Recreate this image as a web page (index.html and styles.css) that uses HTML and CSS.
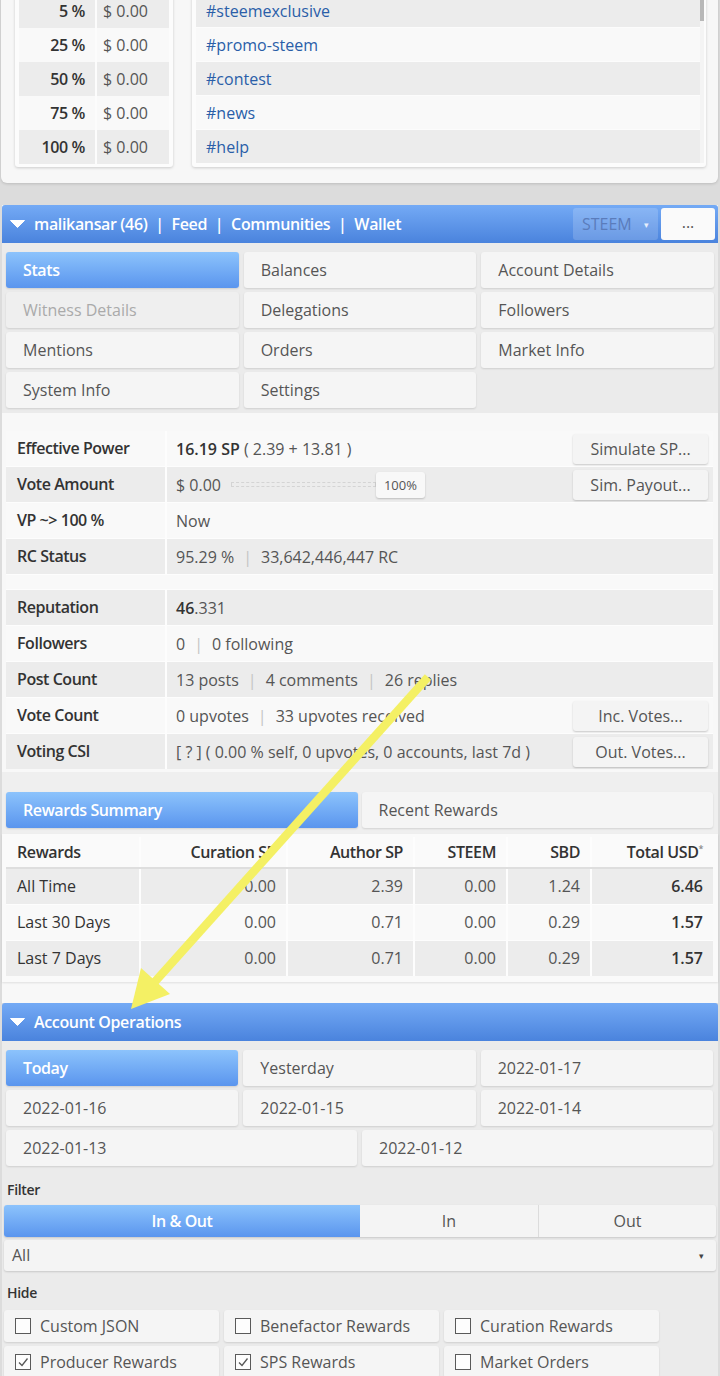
FILE: index.html
```html
<!DOCTYPE html>
<html lang="en">
<head>
    <meta charset="UTF-8">
    <meta name="viewport" content="width=device-width, initial-scale=1.0">
    <title>malikansar - Wallet Stats</title>
    <link rel="stylesheet" href="styles.css">
</head>
<body>
    <!-- Vote value table and trending tags -->
    <div class="top-panel">
        <div class="vote-card">
            <div class="vote-row"><span class="pct">5 %</span><span class="usd">$ 0.00</span></div>
            <div class="vote-row"><span class="pct">25 %</span><span class="usd">$ 0.00</span></div>
            <div class="vote-row"><span class="pct">50 %</span><span class="usd">$ 0.00</span></div>
            <div class="vote-row"><span class="pct">75 %</span><span class="usd">$ 0.00</span></div>
            <div class="vote-row"><span class="pct">100 %</span><span class="usd">$ 0.00</span></div>
        </div>
        <div class="tag-card">
            <div class="tag-list">
                <div class="tag-row">#steemexclusive</div>
                <div class="tag-row">#promo-steem</div>
                <div class="tag-row">#contest</div>
                <div class="tag-row">#news</div>
                <div class="tag-row">#help</div>
            </div>
            <div class="scrollbar"><div class="thumb"></div></div>
        </div>
    </div>

    <!-- Account wallet panel -->
    <div class="wallet">
        <div class="bar-head">
            <svg class="caret" width="15" height="8" viewBox="0 0 15 8"><polygon points="0.5,0.5 14.5,0.5 7.5,7.5" fill="#fff" stroke="#fff" stroke-linejoin="round"/></svg>
            <span class="head-links">malikansar (46) <i>|</i> Feed <i>|</i> Communities <i>|</i> Wallet</span>
            <span class="coin-select">STEEM <small>&#9662;</small></span>
            <span class="more-btn">...</span>
        </div>

        <div class="tab-grid">
            <div class="tab active">Stats</div>
            <div class="tab">Balances</div>
            <div class="tab">Account Details</div>
            <div class="tab disabled">Witness Details</div>
            <div class="tab">Delegations</div>
            <div class="tab">Followers</div>
            <div class="tab">Mentions</div>
            <div class="tab">Orders</div>
            <div class="tab">Market Info</div>
            <div class="tab">System Info</div>
            <div class="tab">Settings</div>
        </div>

        <div class="stats">
            <div class="stat-table">
                <div class="stat-row light">
                    <div class="label">Effective Power</div>
                    <div class="value"><b>16.19 SP</b>&nbsp;( 2.39 + 13.81 )<span class="side-btn">Simulate SP...</span></div>
                </div>
                <div class="stat-row dark">
                    <div class="label">Vote Amount</div>
                    <div class="value">$ 0.00<span class="slider"></span><span class="pct-btn">100%</span><span class="side-btn">Sim. Payout...</span></div>
                </div>
                <div class="stat-row light">
                    <div class="label">VP ~&gt; 100 %</div>
                    <div class="value">Now</div>
                </div>
                <div class="stat-row dark">
                    <div class="label">RC Status</div>
                    <div class="value">95.29 %<i class="sep">|</i>33,642,446,447 RC</div>
                </div>
                <div class="stat-spacer"></div>
                <div class="stat-row dark">
                    <div class="label">Reputation</div>
                    <div class="value"><b>46</b>.331</div>
                </div>
                <div class="stat-row light">
                    <div class="label">Followers</div>
                    <div class="value">0<i class="sep">|</i>0 following</div>
                </div>
                <div class="stat-row dark">
                    <div class="label">Post Count</div>
                    <div class="value">13 posts<i class="sep">|</i>4 comments<i class="sep">|</i>26 replies</div>
                </div>
                <div class="stat-row light">
                    <div class="label">Vote Count</div>
                    <div class="value">0 upvotes<i class="sep">|</i>33 upvotes received<span class="side-btn">Inc. Votes...</span></div>
                </div>
                <div class="stat-row dark">
                    <div class="label">Voting CSI</div>
                    <div class="value">[ ? ] ( 0.00 % self, 0 upvotes, 0 accounts, last 7d )<span class="side-btn">Out. Votes...</span></div>
                </div>
            </div>
        </div>

        <div class="rewards">
            <div class="reward-tabs">
                <div class="tab active">Rewards Summary</div>
                <div class="tab">Recent Rewards</div>
            </div>
        </div>
        <div class="reward-card">
            <div class="reward-table">
                <div class="rw-row head">
                    <span class="first">Rewards</span><span>Curation SP</span><span>Author SP</span><span>STEEM</span><span>SBD</span><span>Total USD<sup>*</sup></span>
                </div>
                <div class="rw-row dark">
                    <span class="first">All Time</span><span>0.00</span><span>2.39</span><span>0.00</span><span>1.24</span><span class="total">6.46</span>
                </div>
                <div class="rw-row light">
                    <span class="first">Last 30 Days</span><span>0.00</span><span>0.71</span><span>0.00</span><span>0.29</span><span class="total">1.57</span>
                </div>
                <div class="rw-row dark">
                    <span class="first">Last 7 Days</span><span>0.00</span><span>0.71</span><span>0.00</span><span>0.29</span><span class="total">1.57</span>
                </div>
            </div>
        </div>
    </div>

    <!-- Account operations panel -->
    <div class="ops">
        <div class="bar-head">
            <svg class="caret" width="15" height="8" viewBox="0 0 15 8"><polygon points="0.5,0.5 14.5,0.5 7.5,7.5" fill="#fff" stroke="#fff" stroke-linejoin="round"/></svg>
            <span class="head-links">Account Operations</span>
        </div>
        <div class="ops-body">
            <div class="date-grid">
                <div class="tab active">Today</div>
                <div class="tab">Yesterday</div>
                <div class="tab">2022-01-17</div>
                <div class="tab">2022-01-16</div>
                <div class="tab">2022-01-15</div>
                <div class="tab">2022-01-14</div>
                <div class="tab wide">2022-01-13</div>
                <div class="tab wide">2022-01-12</div>
            </div>

            <div class="field-label">Filter</div>
            <div class="segment">
                <span class="on">In &amp; Out</span>
                <span>In</span>
                <span>Out</span>
            </div>
            <div class="select-box">All<small>&#9662;</small></div>

            <div class="field-label hide-label">Hide</div>
            <div class="check-grid">
                <label class="check"><span class="box"></span>Custom JSON</label>
                <label class="check"><span class="box"></span>Benefactor Rewards</label>
                <label class="check"><span class="box"></span>Curation Rewards</label>
                <label class="check"><span class="box"><svg width="12" height="12" viewBox="0 0 12 12"><polyline points="2,6.5 5,9.5 10.5,2.5" fill="none" stroke="#555" stroke-width="1.3"/></svg></span>Producer Rewards</label>
                <label class="check"><span class="box"><svg width="12" height="12" viewBox="0 0 12 12"><polyline points="2,6.5 5,9.5 10.5,2.5" fill="none" stroke="#555" stroke-width="1.3"/></svg></span>SPS Rewards</label>
                <label class="check"><span class="box"></span>Market Orders</label>
            </div>
        </div>
    </div>

    <!-- highlighter arrow drawn on top -->
    <svg class="pointer" width="720" height="1376" viewBox="0 0 720 1376">
        <line x1="428" y1="677" x2="152" y2="985" stroke="#f4f064" stroke-width="8.5"/>
        <polygon points="131,1009 141,968 170,994" fill="#f4f064"/>
    </svg>
</body>
</html>
```

FILE: styles.css
```css
body {
    margin: 0;
    font-family: "Open Sans", "Liberation Sans", sans-serif;
    font-size: 16px;
    color: #555;
    background-color: #dcdcdc;
    position: relative;
    overflow: hidden;
}

/* top panel: vote values + tags */
.top-panel {
    margin: -10px 2px 0 1px;
    padding: 0 12px 16px 14px;
    background-color: #f7f7f7;
    border-radius: 0 0 6px 6px;
    box-shadow: 0 1px 3px rgba(0, 0, 0, 0.15);
    display: flex;
    gap: 19px;
}
.vote-card,
.tag-card {
    background-color: #fcfcfc;
    border-radius: 0 0 3px 3px;
    box-shadow: 0 1px 3px rgba(0, 0, 0, 0.18);
    padding: 4px;
}
.vote-card {
    width: 150px;
}
.vote-row {
    display: grid;
    grid-template-columns: 76px 72px;
    column-gap: 2px;
    height: 33px;
    line-height: 34px;
    margin-bottom: 1px;
}
.vote-row:last-child,
.tag-row:last-child {
    margin-bottom: 0;
}
.vote-row span {
    background-color: #f9f9f9;
}
.vote-row:nth-child(odd) span {
    background-color: #ececec;
}
.pct {
    text-align: right;
    padding-right: 10px;
    font-weight: 600;
    letter-spacing: -0.4px;
    color: #333;
}
.usd {
    padding-left: 6px;
}
.tag-card {
    flex: 1;
    display: flex;
    padding-right: 2px;
}
.tag-list {
    flex: 1;
}
.tag-row {
    height: 33px;
    line-height: 34px;
    margin-bottom: 1px;
    padding-left: 10px;
    color: #2a5ea8;
    background-color: #f9f9f9;
}
.tag-row:nth-child(odd) {
    background-color: #ececec;
}
.scrollbar {
    width: 4px;
    background-color: #f4f4f4;
}
.thumb {
    height: 27px;
    background-color: #b8b8b8;
}

/* blue section bars */
.bar-head {
    height: 38px;
    display: flex;
    align-items: center;
    padding: 0 3px 0 8px;
    background: linear-gradient(#74aaf5, #4a83dd);
    border-radius: 3px 3px 0 0;
    color: #fff;
    font-weight: 600;
    letter-spacing: -0.35px;
}
.caret {
    margin-right: 9px;
}
.head-links i {
    font-style: normal;
    margin: 0 4px;
}
.coin-select {
    margin-left: auto;
    width: 85px;
    height: 32px;
    line-height: 32px;
    box-sizing: border-box;
    padding-left: 9px;
    background-color: rgba(255, 255, 255, 0.17);
    border-radius: 3px;
    color: #5a7cbb;
    font-weight: 400;
    letter-spacing: 0;
}
.coin-select small {
    font-size: 9px;
    color: #e6eefc;
    margin-left: 8px;
    vertical-align: 2px;
}
.more-btn {
    width: 54px;
    height: 32px;
    line-height: 28px;
    margin-left: 3px;
    text-align: center;
    background-color: #fafafa;
    border-radius: 3px;
    color: #555;
    font-weight: 400;
    letter-spacing: 0;
}

/* wallet panel */
.wallet {
    margin: 22px 2px 0 2px;
    background-color: #f8f8f8;
    padding-bottom: 21px;
}
.tab-grid {
    background-color: #ebebeb;
    padding: 9px 4px 5px 4px;
    display: grid;
    grid-template-columns: repeat(3, 1fr);
    gap: 4px 5px;
}
.tab {
    height: 36px;
    line-height: 36px;
    padding-left: 17px;
    background-color: #f5f5f5;
    border-radius: 3px;
    box-shadow: 0 1px 2px rgba(0, 0, 0, 0.12);
    color: #555;
    white-space: nowrap;
}
.tab.active {
    background: linear-gradient(#8cc3fc, #5a95ee);
    color: #fff;
    font-weight: 600;
    letter-spacing: -0.4px;
}
.tab.disabled {
    background-color: #efefef;
    color: #aaa;
}

/* stats table */
.stats {
    padding: 18px 5px 2px 4px;
}
.stat-table {
    background-color: #fdfdfd;
}
.stat-row {
    display: grid;
    grid-template-columns: 159px 1fr;
    column-gap: 2px;
    height: 35px;
    margin-bottom: 1px;
}
.stat-row.light > div {
    background-color: #f9f9f9;
}
.stat-row.dark > div {
    background-color: #ececec;
}
.stat-row .label {
    padding-left: 11px;
    line-height: 35px;
    font-weight: 600;
    letter-spacing: -0.45px;
    color: #333;
}
.stat-row .value {
    padding-left: 9px;
    display: flex;
    align-items: center;
    white-space: nowrap;
}
.value b {
    font-weight: 600;
    color: #333;
}
.sep {
    font-style: normal;
    color: #c4c4c4;
    margin: 0 9px;
}
.stat-spacer {
    height: 14px;
    background-color: #f9f9f9;
    margin-bottom: 1px;
}
.side-btn {
    margin-left: auto;
    margin-right: 5px;
    width: 135px;
    height: 30px;
    line-height: 30px;
    text-align: center;
    background-color: #f4f4f4;
    border-radius: 3px;
    box-shadow: 0 1px 2px rgba(0, 0, 0, 0.2);
}
.slider {
    width: 143px;
    height: 3px;
    margin-left: 10px;
    border: 1px dashed #d4d4d4;
}
.pct-btn {
    width: 49px;
    height: 26px;
    line-height: 26px;
    text-align: center;
    font-size: 13px;
    background-color: #f8f8f8;
    border-radius: 3px;
    box-shadow: 0 1px 2px rgba(0, 0, 0, 0.2);
}

/* rewards summary */
.rewards {
    background-color: #efefef;
    padding: 20px 5px 6px 4px;
}
.reward-tabs {
    display: grid;
    grid-template-columns: 1fr 1fr;
    gap: 4px;
}
.reward-card {
    padding: 3px 5px 5px 4px;
    background-color: #fafafa;
    box-shadow: 0 1px 2px rgba(0, 0, 0, 0.1);
}
.reward-table {
    background-color: #fdfdfd;
}
.rw-row {
    display: grid;
    grid-template-columns: 133px 145px 125px 91px 82px 1fr;
    column-gap: 2px;
    height: 35px;
    margin-bottom: 1px;
}
.rw-row span {
    text-align: right;
    padding-right: 10px;
    line-height: 35px;
}
.rw-row span.first {
    text-align: left;
    padding-left: 11px;
    color: #333;
}
.rw-row.head {
    height: 30px;
    border-bottom: 2px solid #dedede;
    margin-bottom: 0;
}
.rw-row.head span {
    line-height: 30px;
    font-weight: 600;
    letter-spacing: -0.4px;
    color: #333;
    background-color: #fafafa;
}
.rw-row.head sup {
    font-size: 9px;
    line-height: 0;
    vertical-align: 6px;
    color: #888;
}
.rw-row.dark span {
    background-color: #ececec;
}
.rw-row.light span {
    background-color: #f9f9f9;
}
.rw-row .total {
    font-weight: 600;
    color: #333;
}

/* account operations */
.ops {
    margin: 0 2px;
}
.ops-body {
    background-color: #ebebeb;
    padding: 9px 2px 20px 2px;
    min-height: 400px;
}
.date-grid {
    display: grid;
    grid-template-columns: repeat(6, 1fr);
    gap: 4px 5px;
    margin: 0 3px 0 2px;
}
.date-grid .tab {
    grid-column: span 2;
}
.date-grid .tab.wide {
    grid-column: span 3;
}
.field-label {
    font-size: 14px;
    font-weight: 600;
    letter-spacing: -0.3px;
    color: #333;
    line-height: 20px;
    margin: 14px 0 5px 3px;
}
.hide-label {
    margin-top: 12px;
    margin-bottom: 7px;
}
.segment {
    display: grid;
    grid-template-columns: 2fr 1fr 1fr;
    height: 32px;
    line-height: 32px;
    text-align: center;
    background-color: #f4f4f4;
    border-radius: 3px;
    box-shadow: 0 1px 2px rgba(0, 0, 0, 0.15);
}
.segment span + span + span {
    border-left: 1px solid #dcdcdc;
}
.segment .on {
    background: linear-gradient(#8cc3fc, #5a95ee);
    border-radius: 3px 0 0 3px;
    color: #fff;
    font-weight: 600;
    letter-spacing: -0.4px;
}
.select-box {
    margin-top: 3px;
    height: 31px;
    line-height: 31px;
    padding: 0 12px 0 8px;
    display: flex;
    justify-content: space-between;
    background-color: #f4f4f4;
    border-radius: 3px;
    box-shadow: 0 1px 2px rgba(0, 0, 0, 0.15);
}
.select-box small {
    font-size: 9px;
    color: #444;
}
.check-grid {
    display: grid;
    grid-template-columns: repeat(3, 215px);
    gap: 4px 5px;
}
.check {
    height: 32px;
    display: flex;
    align-items: center;
    gap: 9px;
    padding-left: 11px;
    background-color: #f5f5f5;
    border-radius: 3px;
    box-shadow: 0 1px 2px rgba(0, 0, 0, 0.12);
}
.box {
    width: 14px;
    height: 14px;
    border: 1.5px solid #5a5a5a;
    background-color: #fdfdfd;
    display: flex;
    align-items: center;
    justify-content: center;
}

/* overlay arrow */
.pointer {
    position: absolute;
    left: 0;
    top: 0;
    pointer-events: none;
}
```
